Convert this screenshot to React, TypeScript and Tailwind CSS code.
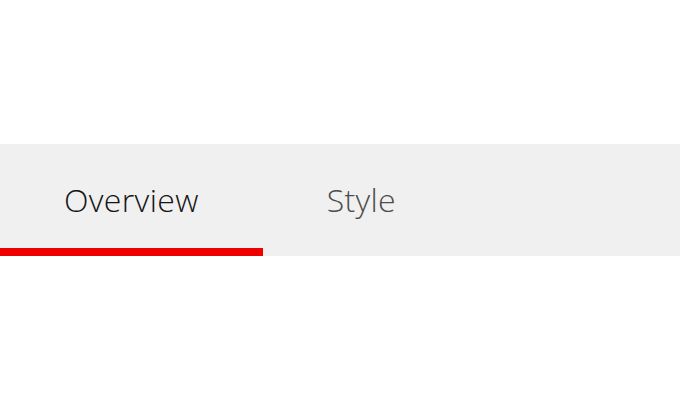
const tabs = ['Overview', 'Style']

export default function App() {
  const active = 0
  return (
    <div className="h-[400px] w-[680px] bg-white pt-[144px]" style={{ fontFamily: '"Open Sans", sans-serif' }}>
      <div className="flex h-[112px] bg-[#f0f0f0]">
        {tabs.map((t, i) => (
          <button
            key={t}
            className={`relative flex h-full items-center px-16 text-[32px] font-light tracking-[0.35px] ${
              i === active ? 'text-[#151515]' : 'text-[#4d4d4d]'
            }`}
          >
            {t}
            {i === active && <span className="absolute bottom-0 left-0 right-0 h-2 bg-[#ee0000]" />}
          </button>
        ))}
      </div>
    </div>
  )
}
